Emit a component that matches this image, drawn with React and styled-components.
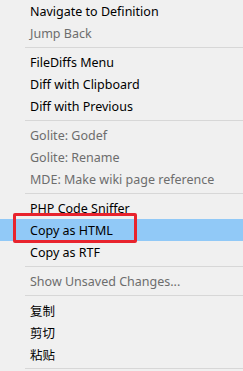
import styled, { createGlobalStyle } from "styled-components";

const GlobalStyle = createGlobalStyle`
  html, body {
    margin: 0;
    padding: 0;
    background: #f0f0f0;
  }
`;

const items = [
  { label: "Navigate to Definition" },
  { label: "Jump Back", disabled: true },
  { sep: true },
  { label: "FileDiffs Menu" },
  { label: "Diff with Clipboard" },
  { label: "Diff with Previous" },
  { sep: true },
  { label: "Golite: Godef", disabled: true },
  { label: "Golite: Rename", disabled: true },
  { label: "MDE: Make wiki page reference", disabled: true },
  { sep: true },
  { label: "PHP Code Sniffer" },
  { label: "Copy as HTML", active: true, marked: true },
  { label: "Copy as RTF" },
  { sep: true },
  { label: "Show Unsaved Changes...", disabled: true },
  { sep: true },
  { label: "复制" },
  { label: "剪切" },
  { label: "粘贴" },
  { sep: true },
];

const App = () => {
  return (
    <>
      <GlobalStyle />
      <Menu>
        {items.map((item, i) =>
          item.sep ? (
            <Separator key={i} />
          ) : (
            <Item key={i} $active={item.active} $disabled={item.disabled}>
              {item.marked && <Mark />}
              <Label>{item.label}</Label>
            </Item>
          )
        )}
      </Menu>
    </>
  );
};

export default App;

const Menu = styled.div`
  width: 243px;
  height: 371px;
  overflow: hidden;
  background: #f0f0f0;
  display: flex;
  flex-direction: column;
  font-family: "Noto Sans", "Noto Sans CJK SC", sans-serif;
  font-size: 12.5px;
`;

const Item = styled.div`
  position: relative;
  flex: none;
  height: 22px;
  display: flex;
  align-items: center;
  padding-left: 30px;
  color: ${(p) => (p.$disabled ? "#6d6d6d" : "#000")};
  background: ${(p) => (p.$active ? "#91c9f7" : "transparent")};
`;

const Label = styled.span`
  white-space: nowrap;
`;

const Mark = styled.div`
  position: absolute;
  left: 13px;
  top: -6px;
  width: 118px;
  height: 24px;
  border: 3px solid #e8232d;
  border-radius: 2px;
`;

const Separator = styled.div`
  flex: none;
  height: 7px;
  margin-left: 25px;
  display: flex;
  align-items: center;
  &::after {
    content: "";
    display: block;
    width: 100%;
    height: 1px;
    background: #d7d7d7;
  }
`;
